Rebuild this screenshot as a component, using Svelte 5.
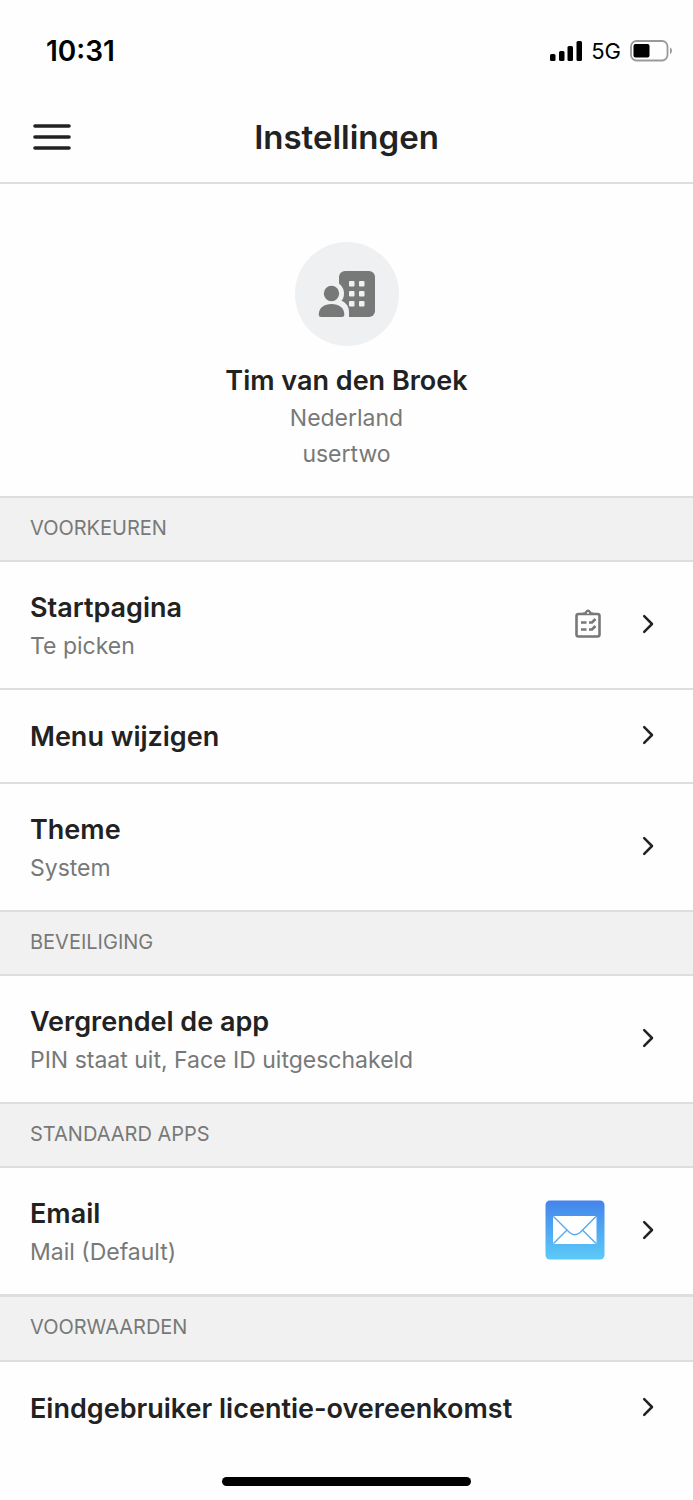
<script lang="ts">
	type Setting = {
		title: string;
		subtitle?: string;
		icon?: 'tasks' | 'mail';
	};

	type Section = {
		label: string;
		settings: Setting[];
	};

	const user = {
		name: 'Tim van den Broek',
		country: 'Nederland',
		username: 'usertwo'
	};

	const sections: Section[] = [
		{
			label: 'VOORKEUREN',
			settings: [
				{ title: 'Startpagina', subtitle: 'Te picken', icon: 'tasks' },
				{ title: 'Menu wijzigen' },
				{ title: 'Theme', subtitle: 'System' }
			]
		},
		{
			label: 'BEVEILIGING',
			settings: [{ title: 'Vergrendel de app', subtitle: 'PIN staat uit, Face ID uitgeschakeld' }]
		},
		{
			label: 'STANDAARD APPS',
			settings: [{ title: 'Email', subtitle: 'Mail (Default)', icon: 'mail' }]
		},
		{
			label: 'VOORWAARDEN',
			settings: [{ title: 'Eindgebruiker licentie-overeenkomst' }]
		}
	];
</script>

<div class="screen">
	<div class="status-bar">
		<span class="time">10:31</span>
		<div class="status-icons">
			<svg width="32" height="20" viewBox="0 0 32 20" aria-hidden="true">
				<rect x="0" y="13" width="5.500" height="7" rx="1.5" />
				<rect x="9" y="10" width="5.500" height="10" rx="1.5" />
				<rect x="17.500" y="5" width="5.500" height="15" rx="1.5" />
				<rect x="26.500" y="0" width="5.500" height="20" rx="1.5" />
			</svg>
			<span class="network">5G</span>
			<svg width="43" height="22" viewBox="0 0 43 22" aria-hidden="true">
				<rect x="1" y="1" width="36.5" height="19.5" rx="5.5" fill="none" stroke="#999" stroke-width="1.8" />
				<rect x="3.5" y="4" width="16" height="13.5" rx="2" />
				<path d="M40 7.5c2.6 1 2.6 5.500 0 6.500z" fill="#999" />
			</svg>
		</div>
	</div>

	<header>
		<button class="menu" aria-label="Menu">
			<svg width="38" height="28" viewBox="0 0 38 28" aria-hidden="true">
				<path d="M2 3h34M2 14h34M2 25h34" stroke="#222" stroke-width="3.6" stroke-linecap="round" />
			</svg>
		</button>
		<h1>Instellingen</h1>
	</header>

	<main>
		<div class="profile">
			<div class="avatar">
				<svg width="58" height="48" viewBox="0 0 58 48" aria-hidden="true">
					<rect x="21" y="1" width="36" height="46" rx="6" fill="#777978" />
					<g fill="#eff0f2">
						<rect x="31" y="11" width="5.500" height="5.500" rx="1" />
						<rect x="41" y="11" width="5.500" height="5.500" rx="1" />
						<rect x="31" y="21" width="5.500" height="5.500" rx="1" />
						<rect x="41" y="21" width="5.500" height="5.500" rx="1" />
						<rect x="31" y="31" width="5.500" height="5.500" rx="1" />
						<rect x="41" y="31" width="5.500" height="5.500" rx="1" />
						<circle cx="13.500" cy="23.500" r="12.500" />
						<path d="M0 30h21c6 1 10 6 10 12v6H0z" />
					</g>
					<g fill="#777978">
						<circle cx="13.500" cy="23.500" r="7.700" />
						<path d="M.8 44.500c0-7 5.500-10.500 12.700-10.500s12.800 3.500 12.800 10.500c0 1.700-.8 2.500-2.500 2.500H3.300C1.600 47 .8 46.200.8 44.500z" />
					</g>
				</svg>
			</div>
			<h2>{user.name}</h2>
			<p>{user.country}</p>
			<p>{user.username}</p>
		</div>

		{#each sections as section}
			<section>
				<h3>{section.label}</h3>
				{#each section.settings as setting}
					<button class="setting" class:tall={setting.subtitle}>
						<span class="text">
							<span class="title">{setting.title}</span>
							{#if setting.subtitle}
								<span class="subtitle">{setting.subtitle}</span>
							{/if}
						</span>
						{#if setting.icon === 'tasks'}
							<svg class="tasks" width="26" height="30" viewBox="0 0 26 30" fill="none" stroke="#777978" aria-hidden="true">
								<rect x="1.500" y="5" width="23" height="22.500" rx="2" stroke-width="2.600" />
								<path d="M7.500 5.500V4h2.400c.6-4 5.600-4 6.200 0h2.400v1.500z" fill="#777978" stroke-width="1" />
								<circle cx="13" cy="4" r="1" fill="#fff" stroke="none" />
								<path d="M6 13.500h5.500M6 20.500h5.500" stroke-width="2.600" />
								<path d="M14 13.500h3l3.500-3.500M14 20.500h3l3.500-3.500" stroke-width="2.600" />
							</svg>
						{:else if setting.icon === 'mail'}
							<svg class="mail" width="60" height="60" viewBox="0 0 60 60" aria-hidden="true">
								<defs>
									<linearGradient id="mail-bg" x1="0" y1="0" x2="0" y2="1">
										<stop offset="0" stop-color="#4484ec" />
										<stop offset="1" stop-color="#5bcbf8" />
									</linearGradient>
								</defs>
								<rect x=".5" y=".5" width="59" height="59" rx="4.500" fill="url(#mail-bg)" />
								<rect x="8" y="16" width="43.500" height="28" rx="1.500" fill="#fff" />
								<path
									d="M8.500 16.500 24.500 32.500q5.300 4.500 10.600 0L51 16.500M8.500 43.500 22 30M51 43.500 37.500 30"
									fill="none"
									stroke="#55a9f2"
									stroke-width="1.400"
								/>
							</svg>
						{/if}
						<svg class="chevron" width="12" height="20" viewBox="0 0 12 20" aria-hidden="true">
							<path d="M2.200 2.200 10 10l-7.800 7.800" fill="none" stroke="#222" stroke-width="2.500" stroke-linecap="round" stroke-linejoin="round" />
						</svg>
					</button>
				{/each}
			</section>
		{/each}
	</main>

	<div class="home-indicator"></div>
</div>

<style>
	:global(body) {
		margin: 0;
		background: #fefefe;
	}

	.screen {
		display: flex;
		flex-direction: column;
		min-height: 100vh;
		box-sizing: border-box;
		color: #222;
		font-family: Inter, 'Liberation Sans', sans-serif;
	}

	.status-bar {
		display: flex;
		align-items: center;
		justify-content: space-between;
		height: 102px;
		padding: 0 20px 0 46px;
		box-sizing: border-box;
		color: #000;
	}

	.time {
		font-size: 28px;
		font-weight: 600;
	}

	.status-icons {
		display: flex;
		align-items: center;
		gap: 9px;
	}

	.network {
		font-size: 22px;
	}

	header {
		display: grid;
		grid-template-columns: 71px 1fr 71px;
		align-items: center;
		height: 82px;
		box-sizing: border-box;
		padding-bottom: 10px;
		border-bottom: 2px solid #dbdfde;
	}

	button {
		border: 0;
		padding: 0;
		background: none;
		color: inherit;
		font: inherit;
		cursor: pointer;
	}

	.menu {
		display: flex;
		justify-content: flex-end;
	}

	h1,
	h2,
	h3,
	p {
		margin: 0;
	}

	h1,
	h2 {
		font-weight: 600;
		text-align: center;
	}

	h1 {
		font-size: 33px;
		line-height: 40px;
	}

	.profile {
		display: flex;
		flex-direction: column;
		align-items: center;
		padding: 58px 20px 24px;
	}

	.avatar {
		display: grid;
		place-items: center;
		width: 104px;
		height: 104px;
		margin-bottom: 16px;
		border-radius: 50%;
		background: #eff0f2;
	}

	h2 {
		font-size: 27px;
		line-height: 38px;
	}

	p,
	.subtitle {
		color: #777978;
		font-size: 23px;
		line-height: 36px;
	}

	h3 {
		height: 66px;
		box-sizing: border-box;
		padding: 0 30px;
		border: solid #dbdfde;
		border-width: 2px 0;
		background: #f1f1f1;
		color: #777978;
		font-size: 20px;
		font-weight: 400;
		line-height: 60px;
	}

	section:last-child h3 {
		height: 68px;
		border-top-width: 3px;
	}

	.setting {
		display: flex;
		align-items: center;
		box-sizing: border-box;
		width: 100%;
		height: 92px;
		padding: 0 39px 2px 30px;
		text-align: left;
	}

	.setting.tall {
		height: 126px;
	}

	.setting + .setting {
		height: 94px;
		border-top: 2px solid #dbdfde;
	}

	.setting + .setting.tall {
		height: 128px;
	}

	.text {
		display: flex;
		flex: 1;
		flex-direction: column;
		padding-top: 4px;
	}

	.title {
		font-size: 27px;
		font-weight: 600;
		line-height: 40px;
	}

	.tasks {
		margin-right: 41px;
	}

	.mail {
		margin-right: 37px;
	}

	.home-indicator {
		width: 36%;
		height: 9px;
		margin: auto auto 14px;
		border-radius: 5px;
		background: #000;
	}
</style>
